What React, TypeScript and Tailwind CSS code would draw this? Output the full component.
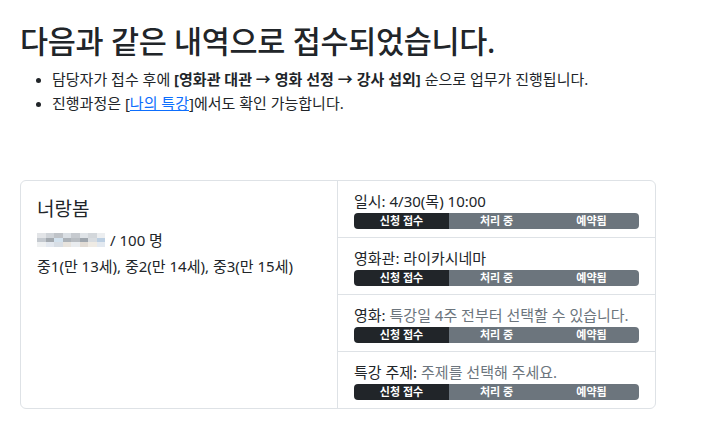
const font = {
  fontFamily: '"Noto Sans", "Noto Sans CJK KR", sans-serif',
};

const StepBar = () => (
  <div className="flex h-4 w-full overflow-hidden rounded-[4px] text-[11px] font-bold leading-4 text-white">
    <div className="flex-1 bg-[#212529] text-center">신청 접수</div>
    <div className="flex-1 bg-[#6c757d] text-center">처리 중</div>
    <div className="flex-1 bg-[#6c757d] text-center">예약됨</div>
  </div>
);

const blurCells = [
  "#e2e4e7", "#cfd3d8", "#bfc3c8", "#dadfe4", "#c6cacf", "#dfe3e7", "#d3d7db", "#eceef0",
  "#c4c9cf", "#a3a9af", "#d3e2ee", "#acb2b8", "#b8bdc2", "#9fa6ad", "#d8dce0", "#bccfe2",
  "#eef0f1", "#e3e8ef", "#d8dee5", "#e8e4de", "#e9ecef", "#e2dcd5", "#efebe4", "#e3e9f0",
];

const Blurred = () => (
  <div className="grid w-[68px] grid-cols-8 grid-rows-3">
    {blurCells.map((c, i) => (
      <div key={i} className="h-[4.5px]" style={{ backgroundColor: c }} />
    ))}
  </div>
);

const Row = ({ label, value, muted }: { label: string; value: string; muted?: boolean }) => (
  <div className="border-b border-[#dee2e6] px-4 pb-2 pt-2 last:border-b-0">
    <div className="text-[15px] leading-[24px]">
      {label}: <span className={muted ? "text-[#6c757d]" : ""}>{value}</span>
    </div>
    <StepBar />
  </div>
);

export default function App() {
  return (
    <div className="min-h-screen bg-white px-5 pt-[22px] text-[#212529]" style={font}>
      <h2 className="text-[30.5px] font-medium leading-[38px] tracking-[-0.3px]">다음과 같은 내역으로 접수되었습니다.</h2>
      <ul className="mt-[7px] list-disc pl-8 text-[15px] leading-6 marker:text-[13px]">
        <li>
          담당자가 접수 후에 <b>[영화관 대관 → 영화 선정 → 강사 섭외]</b> 순으로 업무가 진행됩니다.
        </li>
        <li>
          진행과정은 [<a href="#" className="text-[#0d6efd] underline">나의 특강</a>]에서도 확인 가능합니다.
        </li>
      </ul>

      <div className="mt-[65px] flex w-[636px] rounded-[6px] border border-[#dee2e6]">
        <div className="w-[317px] border-r border-[#dee2e6] px-4 pt-4">
          <div className="text-[19px] leading-6">너랑봄</div>
          <div className="mt-2 flex items-center gap-[5px] text-[15px] leading-[22px]">
            <Blurred />
            <span>/ 100 명</span>
          </div>
          <div className="mt-1 text-[15px] leading-[22px]">중1(만 13세), 중2(만 14세), 중3(만 15세)</div>
        </div>
        <div className="flex-1">
          <Row label="일시" value="4/30(목) 10:00" />
          <Row label="영화관" value="라이카시네마" />
          <Row label="영화" value="특강일 4주 전부터 선택할 수 있습니다." muted />
          <Row label="특강 주제" value="주제를 선택해 주세요." muted />
        </div>
      </div>
    </div>
  );
}
